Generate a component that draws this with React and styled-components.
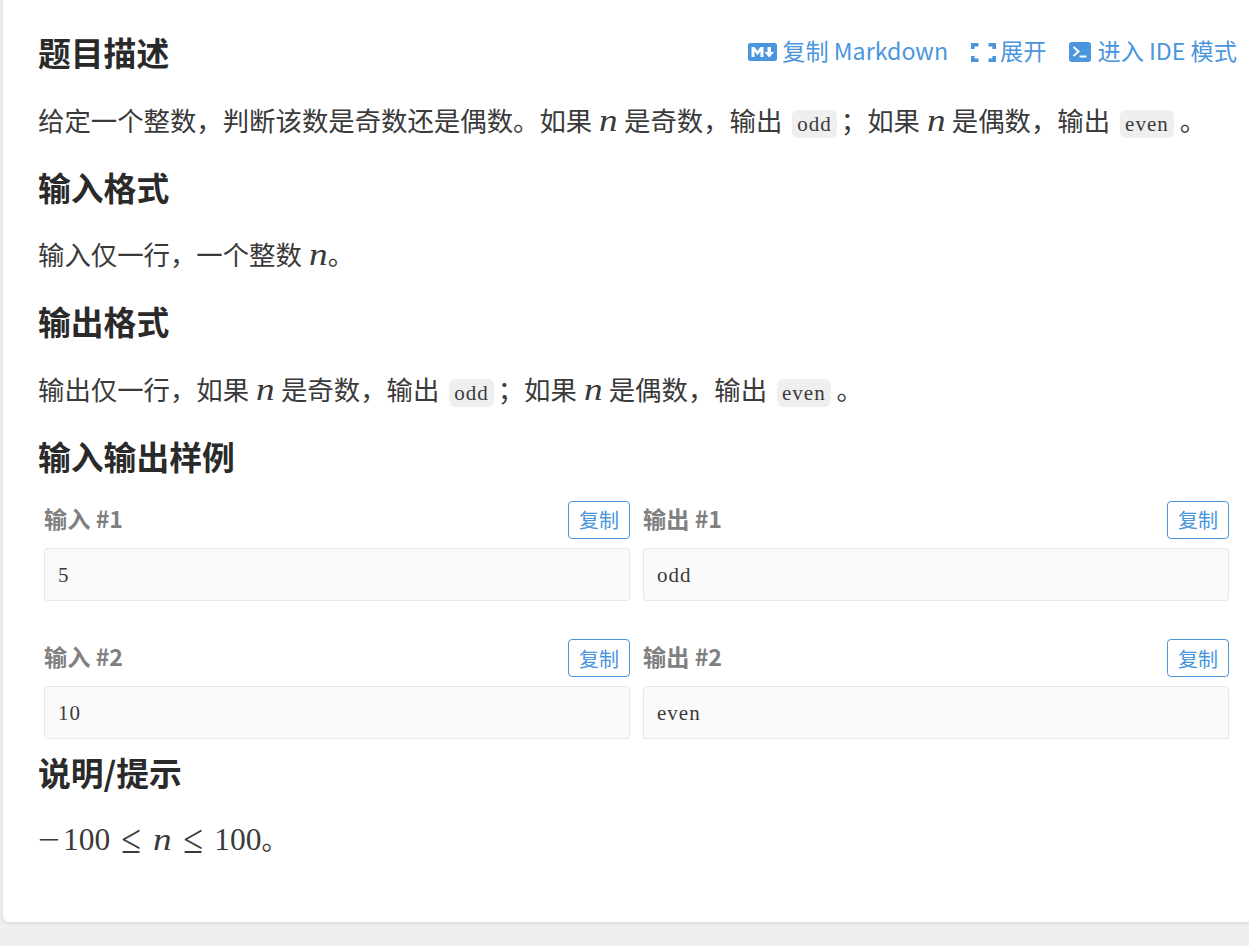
import styled, { createGlobalStyle } from 'styled-components'

const GlobalStyle = createGlobalStyle`
  html, body {
    margin: 0;
    padding: 0;
    overflow: hidden;
    height: 946px;
    background: #efefef;
  }
  body {
    font-family: "Noto Sans CJK SC", "Noto Sans", sans-serif;
    color: #3a3a3a;
  }
`

const MarkdownIcon = () => (
  <svg width="29" height="18" viewBox="0 0 29 18">
    <rect width="29" height="18" rx="2.5" fill="#4a96dd" />
    <path d="M3.5 14V4h3l3 4 3-4h3v10h-3V8.5l-3 3.8-3-3.8V14z" fill="#fff" />
    <path d="M19.5 4h3.5v5h3l-4.8 5.5L16.5 9h3z" fill="#fff" />
  </svg>
)

const ExpandIcon = () => (
  <svg width="25" height="19" viewBox="0 0 25 19" fill="none" stroke="#4a96dd" strokeWidth="3.6">
    <path d="M7.5 1.8H1.8V6" />
    <path d="M1.8 13v4.2h5.7" />
    <path d="M17.5 1.8h5.7V6" />
    <path d="M23.2 13v4.2h-5.7" />
  </svg>
)

const TerminalIcon = () => (
  <svg width="22" height="20" viewBox="0 0 22 20">
    <rect width="22" height="20" rx="3" fill="#4a96dd" />
    <path d="M4.5 5l5 4.5-5 4.5" fill="none" stroke="#fff" strokeWidth="2" />
    <path d="M10.5 14.5h7" fill="none" stroke="#fff" strokeWidth="2" />
  </svg>
)

const samples = [
  { id: 1, input: '5', output: 'odd' },
  { id: 2, input: '10', output: 'even' },
]

export default function App() {
  return (
    <>
      <GlobalStyle />
      <Card>
        <TitleRow>
          <Heading>题目描述</Heading>
          <Toolbar>
            <ToolLink><MarkdownIcon /><ToolText>复制 Markdown</ToolText></ToolLink>
            <ToolLink $gap={4}><ExpandIcon /><ToolText>展开</ToolText></ToolLink>
            <ToolLink $gap={6}><TerminalIcon /><ToolText>进入 IDE 模式</ToolText></ToolLink>
          </Toolbar>
        </TitleRow>
        <Paragraph>
          给定一个整数，判断该数是奇数还是偶数。如果 <MathVar>n</MathVar> 是奇数，输出 <Code>odd</Code>；如果 <MathVar>n</MathVar> 是偶数，输出 <Code $flush>even</Code> 。
        </Paragraph>
        <Heading>输入格式</Heading>
        <Paragraph>输入仅一行，一个整数 <MathVar>n</MathVar>。</Paragraph>
        <Heading>输出格式</Heading>
        <Paragraph>
          输出仅一行，如果 <MathVar>n</MathVar> 是奇数，输出 <Code>odd</Code>；如果 <MathVar>n</MathVar> 是偶数，输出 <Code $flush>even</Code> 。
        </Paragraph>
        <Heading>输入输出样例</Heading>
        <Samples>
          {samples.map((s) => (
            <SampleRow key={s.id}>
              <Sample>
                <SampleHead>
                  <SampleLabel>输入 #{s.id}</SampleLabel>
                  <CopyButton>复制</CopyButton>
                </SampleHead>
                <SampleBox>{s.input}</SampleBox>
              </Sample>
              <Sample>
                <SampleHead>
                  <SampleLabel>输出 #{s.id}</SampleLabel>
                  <CopyButton>复制</CopyButton>
                </SampleHead>
                <SampleBox>{s.output}</SampleBox>
              </Sample>
            </SampleRow>
          ))}
        </Samples>
        <Heading>说明/提示</Heading>
        <MathLine>
          <MathOp>−</MathOp>100<MathRel>≤</MathRel><MathVar>n</MathVar><MathRel>≤</MathRel>100<Tail>。</Tail>
        </MathLine>
      </Card>
    </>
  )
}

const Card = styled.main`
  box-sizing: border-box;
  margin-left: 3px;
  height: 922px;
  padding: 28px 12px 0 35px;
  background: #fff;
  border-radius: 0 0 0 6px;
  box-shadow: 0 1px 4px rgba(0, 0, 0, 0.12);
`

const TitleRow = styled.div`
  display: flex;
  align-items: flex-start;
  justify-content: space-between;
`

const Heading = styled.h2`
  margin: 0 0 20.6px;
  font-size: 32.8px;
  line-height: 48px;
  font-weight: 700;
  color: #2a2a2a;
`

const Toolbar = styled.div`
  display: flex;
  gap: 23px;
`

const ToolLink = styled.a`
  display: flex;
  align-items: center;
  gap: ${(props) => props.$gap || 5}px;
  height: 48px;
  font-size: 23.2px;
  color: #4a96dd;
`

const ToolText = styled.span`
  padding-bottom: 4px;
  line-height: 44px;
`

const Paragraph = styled.p`
  margin: 0 0 20px;
  font-size: 26.4px;
  line-height: 46px;
  color: #3a3a3a;
`

const MathVar = styled.span`
  display: inline-block;
  width: 18px;
  margin: 0 1px;
  font-family: "Liberation Serif", serif;
  font-style: italic;
  font-size: 31px;
  line-height: 1;
  transform: scaleX(1.2);
  transform-origin: left;
`

const Code = styled.code`
  margin: 0 ${(props) => (props.$flush ? 0 : 4)}px 0 4px;
  padding: 2px 5px;
  border-radius: 6px;
  background: #efefef;
  font-family: "Liberation Serif", serif;
  font-size: 21px;
  letter-spacing: 1px;
  line-height: 1;
`

const Samples = styled.div`
  margin-bottom: 9px;
  padding: 0.6px 8px 0 6px;
`

const SampleRow = styled.div`
  display: grid;
  grid-template-columns: 1fr 1fr;
  gap: 13px;
  margin-bottom: 37.9px;

  &:last-child {
    margin-bottom: 0;
  }
`

const Sample = styled.div`
  min-width: 0;
`

const SampleHead = styled.div`
  display: flex;
  align-items: center;
  justify-content: space-between;
  margin-bottom: 9px;
`

const SampleLabel = styled.span`
  margin-bottom: 4px;
  font-size: 23.2px;
  font-weight: 700;
  color: #808080;
`

const CopyButton = styled.button`
  box-sizing: border-box;
  width: 62px;
  height: 38px;
  padding: 0;
  border: 1px solid #4a96dd;
  border-radius: 4px;
  background: #fff;
  font-family: inherit;
  font-size: 20px;
  color: #4a96dd;
`

const SampleBox = styled.pre`
  box-sizing: border-box;
  margin: 0;
  height: 53.2px;
  padding: 0 13px;
  border: 1px solid #e8e8e8;
  border-radius: 3px;
  background: #fafafa;
  font-family: "Liberation Serif", serif;
  font-size: 21px;
  letter-spacing: 1px;
  line-height: 52px;
  color: #3a3a3a;
`

const MathLine = styled.p`
  margin: 0;
  font-family: "Liberation Serif", serif;
  font-size: 31.5px;
  line-height: 46px;
`

const MathOp = styled.span`
  display: inline-block;
  width: 25px;
  line-height: 1;
  transform: scaleX(1.25);
  transform-origin: left;
`

const MathRel = styled.span`
  display: inline-block;
  width: 20px;
  margin: 0 11px;
  font-size: 41px;
  line-height: 1;
  vertical-align: -3px;
  transform: scaleX(0.88);
  transform-origin: left;
`

const Tail = styled.span`
  font-family: "Noto Sans CJK SC", sans-serif;
  font-size: 26.4px;
  line-height: 1;
`
